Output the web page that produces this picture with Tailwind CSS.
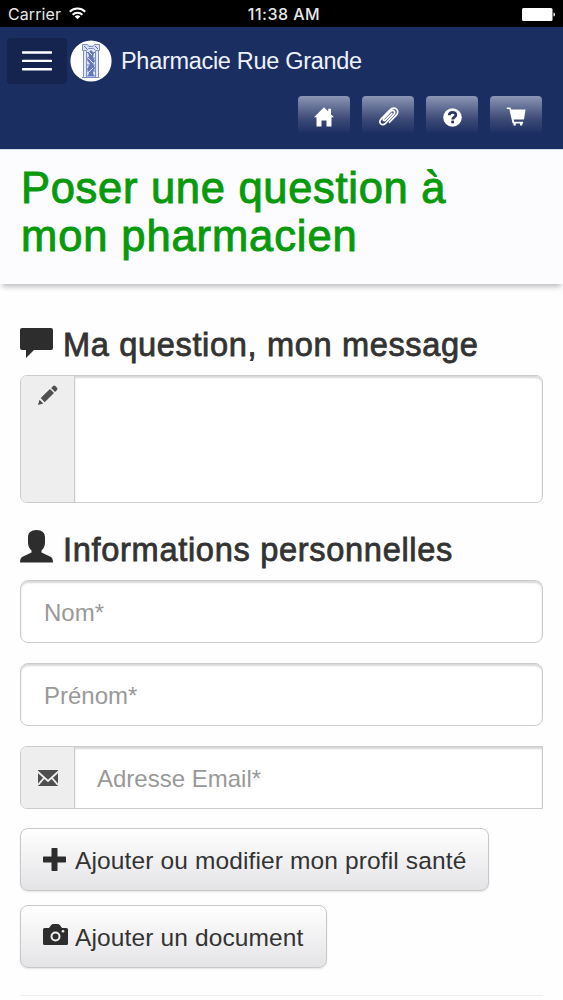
<!DOCTYPE html>
<html lang="fr">
<head>
<meta charset="utf-8">
<title>Pharmacie Rue Grande</title>
<script src="https://cdn.jsdelivr.net/npm/@tailwindcss/browser@4"></script>
</head>
<body class="w-[563px] h-[1000px] overflow-hidden bg-[#fefefe] font-['Liberation_Sans',sans-serif] text-[#333]">
<div class="grid h-[27px] grid-cols-[1fr_auto_1fr] items-center bg-black pl-2 pr-2 pt-0.5 font-['Inter',sans-serif] text-[16px] leading-none text-[#e8e8e8]">
  <div class="flex items-center gap-2">
    <span class="-mt-0.5 tracking-[0.1px]">Carrier</span>
    <svg class="-mt-0.5" width="17" height="13" viewBox="0 0 17 13" fill="none" stroke="#fff" stroke-width="2"><path d="M.8 4.700a11 11 0 0 1 15.400 0M3.600 7.700a7 7 0 0 1 9.800 0"/><path d="M8.500 12.200 5.700 9.500a4 4 0 0 1 5.600 0z" fill="#fff" stroke="none"/></svg>
  </div>
  <span class="-mt-0.5 pl-[5px] font-medium tracking-[0.5px]">11:38 AM</span>
  <svg class="justify-self-end" width="33" height="13" viewBox="0 0 33 13" fill="#fff"><rect width="30.500" height="13" rx="1.500"/><path d="M31.500 4.500q1.500 0 1.500 2t-1.500 2z"/></svg>
</div>

<header class="flex h-[122px] flex-col bg-[#1b2e62] px-[7px] pt-[11px]">
  <div class="flex h-[46px] items-center">
    <button class="flex h-[46px] w-[60px] items-center justify-center rounded bg-[#14244f]">
      <svg width="30" height="20" viewBox="0 0 30 20" fill="#fff"><rect y="0.300" width="30" height="2.400" rx=".6"/><rect y="8.700" width="30" height="2.400" rx=".6"/><rect y="17" width="30" height="2.400" rx=".6"/></svg>
    </button>
    <svg class="ml-[3px]" width="42" height="42" viewBox="0 0 42 42"><circle cx="21" cy="21" r="20.600" fill="#fff"/>
      <path d="M13 5h16v33H13z" fill="#e3e8f6"/>
      <g fill="none" stroke="#7e8fc4" stroke-width="1"><path d="M12.500 4.500h5l1.500 2h4l1.500-2h5v6h-4l-2-2h-5l-2 2h-4z" fill="#dce2f3"/><path d="M13.500 11v26.500M16.500 11v26.500M25.500 11v26.500M28.500 11v26.500M12 37.500h17.500"/><path d="M17 12.500h8M17 18h8M17 25h8M17 31h8M17 36h8" stroke="#6d80bb"/></g>
      <path d="m21 10 3 3-1 4 2 4-2 3 2 4-2 4 1 4h-6l1-4-2-3 3-5-3-4 2-4-1-3z" fill="#6478b8"/><path d="m18 18 5 5m0 5-5 5m1-21 3 3" stroke="#dfe5f5"/><path d="m14 6 3 3m8-3 3 3" stroke="#5c70ad"/></svg>
    <span class="mt-[2px] ml-[9px] text-[23.500px] leading-none tracking-[-0.300px] text-[#eef2fc]">Pharmacie Rue Grande</span>
  </div>
  <nav class="mt-3 flex justify-end gap-3 pr-[14px]">
    <a class="flex h-[38px] w-[52px] items-center justify-center rounded bg-linear-to-b from-[#8d96b4] via-[#3d4b77] via-60% to-[#1b2e62] pt-1"><svg width="20" height="20" viewBox="0 0 20 20" fill="#fff"><path d="M10 .3 20 10.300h-2.500v9.200h-5v-6h-5v6h-5v-9.200H0zM14.200 1.800H17v6l-2.800-2.800z"/></svg></a>
    <a class="flex h-[38px] w-[52px] items-center justify-center rounded bg-linear-to-b from-[#8d96b4] via-[#3d4b77] via-60% to-[#1b2e62] pt-1"><svg width="21" height="20" viewBox="0 0 21 20" fill="none" stroke="#fff" stroke-width="1.650" stroke-linecap="round"><path d="m13.800 6.500-6.300 6.400c-1.400 1.600-3 .2-1.700-1.400l6.700-7c2.700-2.500 5.500.2 3.300 2.900l-8.300 8.900c-3.400 3.300-7.600-.5-4.500-4.200l8.500-8.800c3-3 6.300-2.600 7.700-.3 1 1.900.4 3.800-1.100 5.400l-6.600 6.900"/></svg></a>
    <a class="flex h-[38px] w-[52px] items-center justify-center rounded bg-linear-to-b from-[#8d96b4] via-[#3d4b77] via-60% to-[#1b2e62] pt-1"><svg width="19" height="19" viewBox="0 0 19 19"><circle cx="9.500" cy="9.500" r="9.300" fill="#fff"/><path d="M6.300 7.300c0-4 6.500-3.800 6.500-.4 0 2.200-3.100 2.100-3.100 4.500" fill="none" stroke="#2b3866" stroke-width="2.800"/><path d="M8.200 12.600H11v2.700H8.200z" fill="#2b3866"/></svg></a>
    <a class="flex h-[38px] w-[52px] items-center justify-center rounded bg-linear-to-b from-[#8d96b4] via-[#3d4b77] via-60% to-[#1b2e62] pt-1"><svg width="20" height="20" viewBox="0 0 20 20" fill="#fff"><path d="M.8.400h3.600l.9 2.200h14.200l-1.500 10H7.700l.4 2.200h9v1.600H6.600L3.300 2H.8zM7.500 16.400h2.300v2H7.500zM14 16.400h2.300v2H14z"/></svg></a>
  </nav>
</header>

<section class="h-[135px] border-t border-[#d9deeb] bg-[#fcfbfd] px-[21px] pt-[14px] shadow-[0_5px_5px_-2px_rgba(0,0,0,0.24)]">
  <h1 class="text-[43.500px] leading-[48px] tracking-[0.700px] text-[#089a0c] [-webkit-text-stroke:1px_#089a0c]">Poser une question à<br><span class="tracking-[0.900px]">mon pharmacien</span></h1>
</section>

<main class="px-5 pt-[43px]">
  <h2 class="flex h-[36px] items-center text-[32.600px] leading-9 tracking-[0.640px] [-webkit-text-stroke:0.800px_#333]">
    <svg class="mr-[10px] mb-[4px]" width="33" height="30" viewBox="0 0 33 30" fill="#2d2d2d"><path d="M2 0h29q2 0 2 2v18q0 2-2 2H14l-8 8v-8H2q-2 0-2-2V2q0-2 2-2"/></svg><span>Ma question, mon message</span>
  </h2>
  <div class="mt-[12px] flex h-[128px] w-[523px] overflow-hidden rounded-[7px] border-[1.500px] border-[#ccc]">
    <div class="flex w-[54px] justify-center border-r border-[#ccc] bg-[#eee] pt-[9px]"><svg width="20" height="20" viewBox="0 0 20 20" fill="#4f4f4f"><path d="m0 20 1.500-5.300 3.800 3.800zM2.700 13 12 4l4 4L6.700 17.300zM13.200 3l2-2q1-1 2.200 0L19 2.700q1 1.200 0 2.200l-2 2z"/></svg></div>
    <div class="flex-1 rounded-tr-[6px] bg-white shadow-[inset_0_2px_2px_rgba(0,0,0,0.16)]"></div>
  </div>
  <h2 class="mt-[29px] flex h-[36px] items-center text-[32.600px] leading-9 tracking-[0.680px] [-webkit-text-stroke:0.800px_#333]">
    <svg class="mr-[10px] mb-[7px]" width="33" height="33" viewBox="0 0 33 33" fill="#2d2d2d"><path d="M16.500 0C22 0 25 2.800 25 7.500v5c0 3.500-1.500 6.500-3.500 8v2l9 4.300q2.500 1.300 2.500 5.700H0q0-4.400 2.500-5.700l9-4.300v-2c-2-1.500-3.500-4.500-3.500-8v-5C8 2.800 11 0 16.500 0"/></svg><span>Informations personnelles</span>
  </h2>
  <div class="mt-[12px] flex h-[63px] w-[523px] items-center rounded-[8px] border-[1.500px] border-[#ccc] bg-white pt-0.5 pl-[23px] text-[24px] text-[#999] shadow-[inset_0_2px_2px_rgba(0,0,0,0.16)]">Nom*</div>
  <div class="mt-[20px] flex h-[63px] w-[523px] items-center rounded-[8px] border-[1.500px] border-[#ccc] bg-white pt-0.5 pl-[23px] text-[24px] text-[#999] shadow-[inset_0_2px_2px_rgba(0,0,0,0.16)]">Prénom*</div>
  <div class="mt-[20px] flex h-[63px] w-[523px] overflow-hidden rounded-l-[7px] border-[1.500px] border-[#ccc] text-[24px] text-[#999]">
    <div class="flex w-[54px] items-center justify-center border-r border-[#ccc] bg-[#eee]"><svg width="20" height="16" viewBox="0 0 20 16"><path d="M0 0h20v16H0z" fill="#4f4f4f"/><path d="m-.5 1.500 10.500 9.500 10.500-9.500M0 15l6.500-7.500m7 0L20 15" fill="none" stroke="#eee" stroke-width="1.900"/></svg></div>
    <div class="flex flex-1 items-center bg-white pt-0.5 pl-[22px] shadow-[inset_0_2px_2px_rgba(0,0,0,0.16)]">Adresse Email*</div>
  </div>
  <button class="mt-[19px] flex h-[63px] w-[469px] items-center rounded-[8px] border-[1.500px] border-[#c8c8c8] bg-linear-to-b from-white to-[#e4e3e6] pl-[22px] text-[24.500px] tracking-[0.130px] whitespace-nowrap shadow-[0_1px_2px_rgba(0,0,0,0.1)]">
    <svg class="mr-[9px]" width="23" height="23" viewBox="0 0 23 23" fill="#2d2d2d"><path d="M9.200 0h4.600q.7 0 .7.700v7.800h7.800q.7 0 .7.700v4.600q0 .7-.7.700h-7.800v7.800q0 .7-.7.700H9.200q-.7 0-.7-.7v-7.800H.7q-.7 0-.7-.7V9.200q0-.7.700-.7h7.800V.7q0-.7.700-.7"/></svg><span class="pt-1">Ajouter ou modifier mon profil santé</span>
  </button>
  <button class="mt-[14px] flex h-[63px] w-[307px] items-center rounded-[8px] border-[1.500px] border-[#c8c8c8] bg-linear-to-b from-white to-[#e4e3e6] pl-[22px] text-[24.500px] tracking-[0.130px] whitespace-nowrap shadow-[0_1px_2px_rgba(0,0,0,0.1)]">
    <svg class="mr-[7px] mb-1" width="25" height="21" viewBox="0 0 25 21"><path d="M1.500 4H6l2-2.800Q9 0 10.500 0h4Q16 0 17 1.200L19 4h4.500Q25 4 25 5.500v14q0 1.500-1.500 1.500h-22Q0 21 0 19.500v-14Q0 4 1.500 4" fill="#2d2d2d"/><circle cx="12.500" cy="12.500" r="4" fill="none" stroke="#eee" stroke-width="2"/><circle cx="20" cy="7.300" r="1.300" fill="#eee"/></svg><span class="pt-1">Ajouter un document</span>
  </button>
  <hr class="mt-[27px] w-[523px] border-t-[1.500px] border-[#eee]">
</main>
</body>
</html>
